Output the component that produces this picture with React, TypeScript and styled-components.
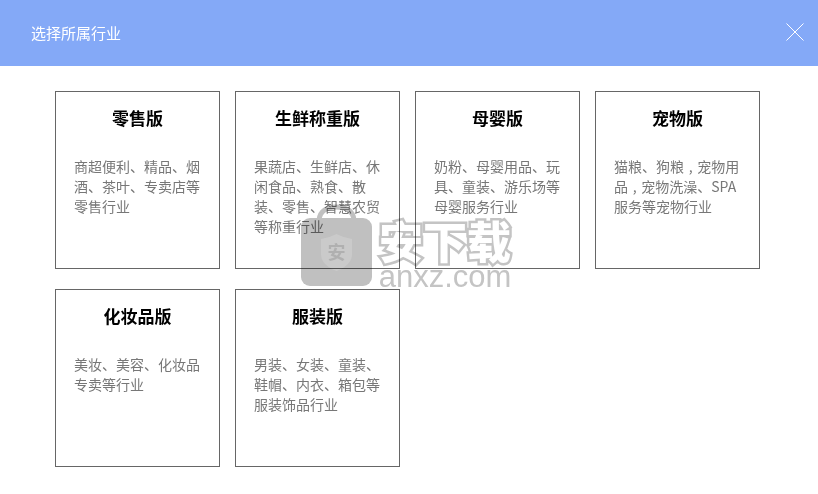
import React from 'react';
import styled, { createGlobalStyle } from 'styled-components';

const GlobalStyle = createGlobalStyle`
    html, body {
        margin: 0;
        padding: 0;
        background: #fff;
        font-family: "Noto Sans CJK SC", "Liberation Sans", sans-serif;
    }
`

const Page = styled.div`
    position: relative;
    width: 818px;
    height: 494px;
    overflow: hidden;
    background-color: #fff;
`

const Header = styled.div`
    display: flex;
    align-items: center;
    justify-content: space-between;
    height: 66px;
    padding: 0 14px 0 31px;
    box-sizing: border-box;
    background-color: #84a9f7;
`

const Title = styled.div`
    margin-bottom: 2px;
    font-size: 15px;
    color: #fff;
`

const CloseIcon = styled.svg`
    display: block;
    width: 18px;
    height: 18px;
    margin-bottom: 2px;
`

const Grid = styled.div`
    display: grid;
    grid-template-columns: repeat(4, 165px);
    grid-auto-rows: 178px;
    column-gap: 15px;
    row-gap: 20px;
    padding: 25px 0 0 55px;
`

const Card = styled.div`
    box-sizing: border-box;
    padding: 12px 18px 0;
    border: 1px solid #666;
`

const CardTitle = styled.div`
    height: 28px;
    line-height: 28px;
    text-align: center;
    font-size: 17px;
    font-weight: 700;
    color: #000;
`

const CardText = styled.div`
    margin-top: 24px;
    font-size: 14px;
    line-height: 20px;
    color: #777;
`

const Watermark = styled.div`
    position: absolute;
    left: 301px;
    top: 204px;
    display: flex;
    gap: 3px;
    mix-blend-mode: multiply;
`

const BagIcon = styled.svg`
    display: block;
    width: 71px;
    height: 82px;
`

const BagText = styled.text`
    font-family: "Noto Sans CJK SC", sans-serif;
    font-size: 18px;
    font-weight: 700;
    fill: #b0b0b0;
`

const Brand = styled.div`
    display: flex;
    flex-direction: column;
    align-items: center;
    width: 140px;
    margin-top: 13px;
`

const BrandName = styled.div`
    height: 46px;
    line-height: 46px;
    font-size: 44px;
    font-weight: 900;
    color: #fff;
    -webkit-text-stroke: 5px #c4c4c4;
    paint-order: stroke fill;
`

const BrandUrl = styled.div`
    margin-top: 1px;
    height: 26px;
    line-height: 26px;
    font-family: "Liberation Sans", sans-serif;
    font-size: 31px;
    color: #c4c4c4;
`

interface IIndustry {
    name: string;
    text: string;
}

// the comma in the pet card sits in the middle of a full cell, hence the padded one
const COMMA = '\u2004,\u2004';

const industries: IIndustry[] = [
    { name: '零售版', text: '商超便利、精品、烟酒、茶叶、专卖店等零售行业' },
    { name: '生鲜称重版', text: '果蔬店、生鲜店、休闲食品、熟食、散装、零售、智慧农贸等称重行业' },
    { name: '母婴版', text: '奶粉、母婴用品、玩具、童装、游乐场等母婴服务行业' },
    { name: '宠物版', text: `猫粮、狗粮${COMMA}宠物用品${COMMA}宠物洗澡、SPA服务等宠物行业` },
    { name: '化妆品版', text: '美妆、美容、化妆品专卖等行业' },
    { name: '服装版', text: '男装、女装、童装、鞋帽、内衣、箱包等服装饰品行业' },
];

const App = () => (
    <Page>
        <GlobalStyle />
        <Header>
            <Title>选择所属行业</Title>
            <CloseIcon viewBox="0 0 18 18">
                <path d="M0.5 0.5L17.5 17.5M17.5 0.5L0.5 17.5" stroke="#fff" strokeWidth="1" fill="none" />
            </CloseIcon>
        </Header>
        <Grid>
            {industries.map(item => (
                <Card key={item.name}>
                    <CardTitle>{item.name}</CardTitle>
                    <CardText>{item.text}</CardText>
                </Card>
            ))}
        </Grid>
        <Watermark>
            <BagIcon viewBox="0 0 71 82">
                <path d="M18 16C19 6 27 3 35 3C44 3 52 6 53 16" stroke="#c0c0c0" strokeWidth="5" fill="none" />
                <rect x="0" y="14" width="71" height="68" rx="9" fill="#c0c0c0" />
                <path d="M20 35Q28 34 35.500 30Q43 34 51 35V50Q51 61 35.500 67Q20 61 20 50Z" fill="#cacaca" />
                <BagText x="35.500" y="55" textAnchor="middle">安</BagText>
            </BagIcon>
            <Brand>
                <BrandName>安下载</BrandName>
                <BrandUrl>anxz.com</BrandUrl>
            </Brand>
        </Watermark>
    </Page>
);

export default App;
